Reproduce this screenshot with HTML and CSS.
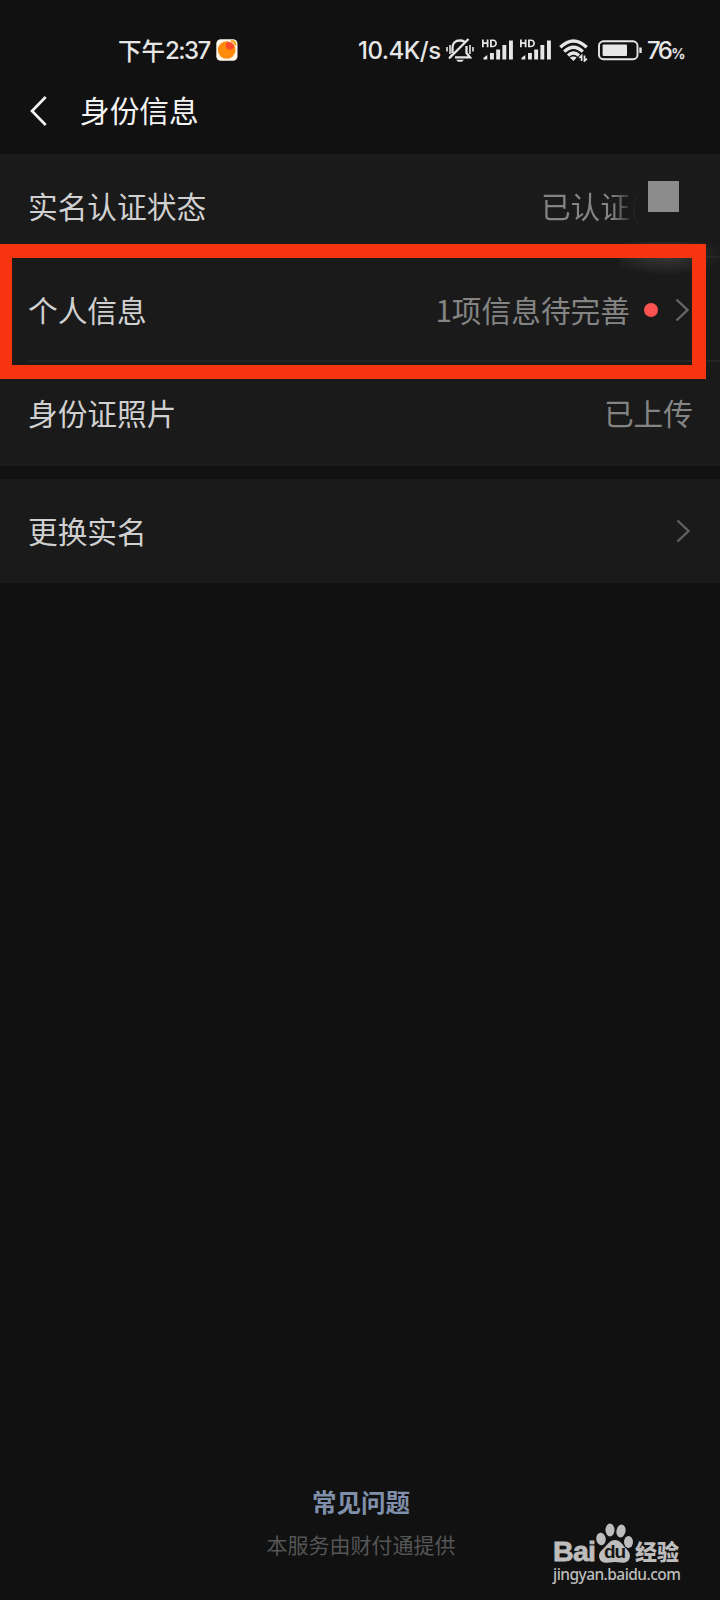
FILE: index.html
```html
<!DOCTYPE html>
<html lang="zh-CN">
<head>
<meta charset="utf-8">
<title>身份信息</title>
<link rel="stylesheet" href="styles.css">
</head>
<body>
<main class="screen">
  <div class="status">
    <div class="status-left">
      <span class="ampm">下午</span><span class="clock">2:37</span>
      <svg class="app-icon" width="22" height="22" viewBox="0 0 22 22"><defs><clipPath id="sun"><circle cx="10.7" cy="11" r="8.8"/></clipPath></defs><rect x=".3" y=".3" width="21.2" height="21.4" rx="4.5" fill="#fff8ea"/><circle cx="10.7" cy="11" r="8.8" fill="#ff8b0b"/><circle cx="14" cy="6.500" r="4.300" fill="#ff4b2d" clip-path="url(#sun)"/><path d="M15 2c3 0 4.500 1.500 4.500 4.500" stroke="#ff9f13" stroke-width="2" fill="none"/></svg>
    </div>
    <div class="status-right">
      <span class="speed">10.4K/s</span>
      <svg class="bell" width="28" height="24" viewBox="0 0 28 24" fill="none" stroke="#e6e6e6" stroke-width="2.300"><path d="M6.500 15V9.500C6.500 5.500 9 2.500 14 2.500c1.800 0 3.300.5 4.500 1.300M20.500 8v7l3.500 4.300H9M3 20.500 22.500 1"/><path d="M10 21.800h8l-2 2h-4z" fill="#e6e6e6" stroke="none"/><path d="M4 19.300 6.500 16M1 9v4.500M4 7v9M24 7v9M27 9v4.500" stroke-width="1.600"/></svg>
      <svg class="signal" width="32" height="22" viewBox="0 0 32 22" fill="#e6e6e6"><path d="M0 .5h1.800v2.800h2.900V.5h1.800v7.700H4.700V5H1.800v3.200H0zM8 .5h3c5.300 0 5.300 7.700 0 7.700H8zm1.800 1.500v4.700H11c3 0 3-4.700 0-4.700z" fill-rule="evenodd"/><path d="M1.500 20.500v-1.800l3.800-2.800v4.600zM8 14h3.900v6.500H8zM14.200 10.500h3.900v10h-3.900zM20.400 6h3.900v14.500h-3.900zM27 1.500h3.900v19H27z"/></svg>
      <svg class="signal second" width="32" height="22" viewBox="0 0 32 22" fill="#e6e6e6"><path d="M0 .5h1.800v2.800h2.900V.5h1.800v7.700H4.700V5H1.800v3.200H0zM8 .5h3c5.300 0 5.300 7.700 0 7.700H8zm1.800 1.500v4.700H11c3 0 3-4.700 0-4.700z" fill-rule="evenodd"/><path d="M1.500 20.500v-1.800l3.800-2.800v4.600zM8 14h3.900v6.500H8zM14.200 10.500h3.900v10h-3.900zM20.400 6h3.900v14.500h-3.900zM27 1.500h3.900v19H27z"/></svg>
      <svg class="wifi" width="30" height="23" viewBox="0 0 30 23" fill="none" stroke="#e6e6e6" stroke-width="3.300"><path d="M1.300 8.300Q14.500-4.500 27.700 8.300M5.200 12.600q9.300-8.900 18.600 0M9 16.500q5.500-5 11 0"/><path d="m10.800 18.500 3.700 3.500 3.200-3.500q-3.200-2.200-6.900 0z" fill="#e6e6e6" stroke="none"/><path d="M22.600 22v-5.500l-2.300 2.400M25.500 16.500V22l2.400-2.400" stroke-width="1.700"/></svg>
      <svg class="battery" width="45" height="21" viewBox="0 0 45 21"><rect x="1" y="1.300" width="38.500" height="17.900" rx="4.500" fill="none" stroke="#e6e6e6" stroke-width="1.900"/><rect x="4.600" y="4.600" width="24.400" height="11.300" rx="1" fill="#e6e6e6"/><path d="M41.300 7.500h2.400v5.500h-2.400z" fill="#e6e6e6"/></svg>
      <span class="percent">76<small>%</small></span>
    </div>
  </div>

  <header class="nav">
    <svg class="back" width="18" height="32" viewBox="0 0 18 32"><path d="M15.700 2 2 16l13.700 14" fill="none" stroke="#f4f4f4" stroke-width="2.700"/></svg>
    <h1>身份信息</h1>
  </header>

  <section class="group">
    <div class="row">
      <span class="label">实名认证状态</span>
      <span class="value verified">已认证(</span>
      <i class="mask"></i>
    </div>
    <div class="row lined personal">
      <i class="smudge"></i>
      <span class="label">个人信息</span>
      <span class="value">1项信息待完善</span>
      <i class="dot"></i>
      <svg class="chevron" width="15" height="24" viewBox="0 0 15 24"><path d="m1.500 1.500 11 10.500-11 10.500" fill="none" stroke="#666" stroke-width="2.400"/></svg>
      <i class="highlight"></i>
    </div>
    <div class="row lined photo">
      <span class="label">身份证照片</span>
      <span class="value">已上传</span>
    </div>
  </section>

  <section class="group">
    <div class="row">
      <span class="label">更换实名</span>
      <svg class="chevron" width="15" height="24" viewBox="0 0 15 24"><path d="m1.500 1.500 11 10.500-11 10.500" fill="none" stroke="#606060" stroke-width="2.400"/></svg>
    </div>
  </section>

  <footer class="footer">
    <a class="faq">常见问题</a>
    <p class="provider">本服务由财付通提供</p>
  </footer>

  <div class="watermark">
    <div class="brand">
      <span class="bai">Bai</span>
      <span class="paw">
        <svg width="38" height="41" viewBox="0 0 38 41" fill="#bdbdbd"><ellipse cx="5" cy="16" rx="4.700" ry="6.200" transform="rotate(-8 5 16)"/><ellipse cx="14" cy="7" rx="4.500" ry="6.400"/><ellipse cx="25" cy="8" rx="4.500" ry="6.500" transform="rotate(12 25 8)"/><ellipse cx="32.500" cy="19" rx="4.500" ry="6"/><path d="M19 17c5 0 7 4 10 7.500 4 3.500 6 7 4.500 11-1.500 4-5 4.800-9 4-4-.7-7-.7-11 0C8 40.500 4 39 3.300 35c-.8-4 .5-6 4.700-10 3.500-3.500 6-8 11-8z"/></svg>
        <b>du</b>
      </span>
      <span class="exp">经验</span>
    </div>
    <div class="url">jingyan.baidu.com</div>
  </div>
</main>
</body>
</html>
```
FILE: styles.css
```css
* { box-sizing: border-box; }

body {
  margin: 0;
  background: #111;
  color: #d0d0d0;
  font-family: "Noto Sans CJK SC", sans-serif;
}

.screen {
  position: relative;
  display: flex;
  flex-direction: column;
  width: 720px;
  height: 1600px;
  overflow: hidden;
}

.status {
  display: flex;
  justify-content: space-between;
  height: 76px;
  padding: 25px 35px 1px 118px;
  color: #e6e6e6;
}

.status-left, .status-right {
  display: flex;
  align-items: center;
  height: 50px;
  white-space: nowrap;
}

.status svg { flex: none; }

.ampm { width: 47px; padding-bottom: 1px; font-size: 23.5px; font-weight: 500; }
.clock { width: 51px; font-family: Inter, sans-serif; font-size: 24px; font-weight: 500; letter-spacing: -1.5px; }
.speed { width: 88px; margin-left: -1px; font-family: Inter, sans-serif; font-size: 24px; font-weight: 500; letter-spacing: -0.5px; }
.bell { margin-right: 8px; }
.signal { margin-right: 6px; }
.second { margin-right: 7px; }
.wifi { margin-right: 9px; }
.battery { margin-right: 4px; }
.percent { width: 38px; font-family: Inter, sans-serif; font-size: 24px; font-weight: 500; letter-spacing: -2.6px; }
.percent small { margin-left: 1px; font-size: 14px; font-weight: 700; }

.nav {
  display: flex;
  align-items: center;
  height: 78px;
  padding: 0 30px 8px;
}

.nav h1 {
  margin: 0 0 0 32px;
  padding-bottom: 4px;
  color: #f4f4f4;
  font-size: 29.7px;
  font-weight: 400;
}

.group { margin-bottom: 13px; background: #1a1a1a; }

.row {
  position: relative;
  display: flex;
  align-items: center;
  height: 104px;
  padding: 0 28px;
  font-size: 29.7px;
  line-height: 44px;
}

.lined::before {
  position: absolute;
  top: -2px;
  right: 0;
  left: 28px;
  height: 2px;
  background: #242427;
  content: "";
}

.label { margin-right: auto; padding-bottom: 1px; }
.value { padding-bottom: 1px; color: #848484; }
.photo .label, .photo .value { padding-bottom: 3px; }
.photo .value { margin-right: -1px; }

.verified {
  margin-right: 8px;
  background: linear-gradient(90deg, #848484 72%, #202020 94%);
  background-clip: text;
  color: transparent;
}

.mask { width: 31px; height: 31px; margin: 0 13px 19px 0; background: #8c8c8c; }
.dot { width: 14px; height: 14px; margin: 0 17px 0 14px; border-radius: 50%; background: #fa5151; }
.chevron { flex: none; margin-right: 1px; }
.personal .chevron { margin-right: 2px; }

.smudge {
  position: absolute;
  top: -16px;
  right: 0;
  width: 100px;
  height: 32px;
  background: radial-gradient(ellipse at 45% 40%, #3c3a3a, transparent 75%);
}

.highlight {
  position: absolute;
  z-index: 1;
  top: -14px;
  left: -2px;
  width: 708px;
  height: 135px;
  border: 14px solid #f63410;
}

.footer {
  display: flex;
  flex-direction: column;
  align-items: center;
  margin-top: auto;
  padding: 0 0 38px 2px;
}

.faq { color: #8090ab; font-size: 24.5px; font-weight: 700; line-height: 40px; }
.provider { margin: 4px 0 0; color: #555; font-size: 21px; line-height: 36px; }

.watermark {
  position: absolute;
  top: 1523px;
  left: 553px;
  width: 130px;
  color: #bdbdbd;
}

.brand { display: flex; align-items: flex-end; height: 41px; }
.bai { width: 43px; font: 700 28.5px/25px "Liberation Sans", sans-serif; letter-spacing: -0.7px; -webkit-text-stroke: 0.8px #bdbdbd; }
.paw { position: relative; width: 38px; height: 41px; }
.paw b { position: absolute; top: 19px; left: 8px; color: #151515; font: 700 19px/20px "Liberation Sans", sans-serif; letter-spacing: -1px; }
.exp { margin-left: 1px; font-size: 22px; font-weight: 900; line-height: 27px; }
.url { font: 500 15.5px/20px "Noto Sans", sans-serif; letter-spacing: -0.55px; white-space: nowrap; }
```
